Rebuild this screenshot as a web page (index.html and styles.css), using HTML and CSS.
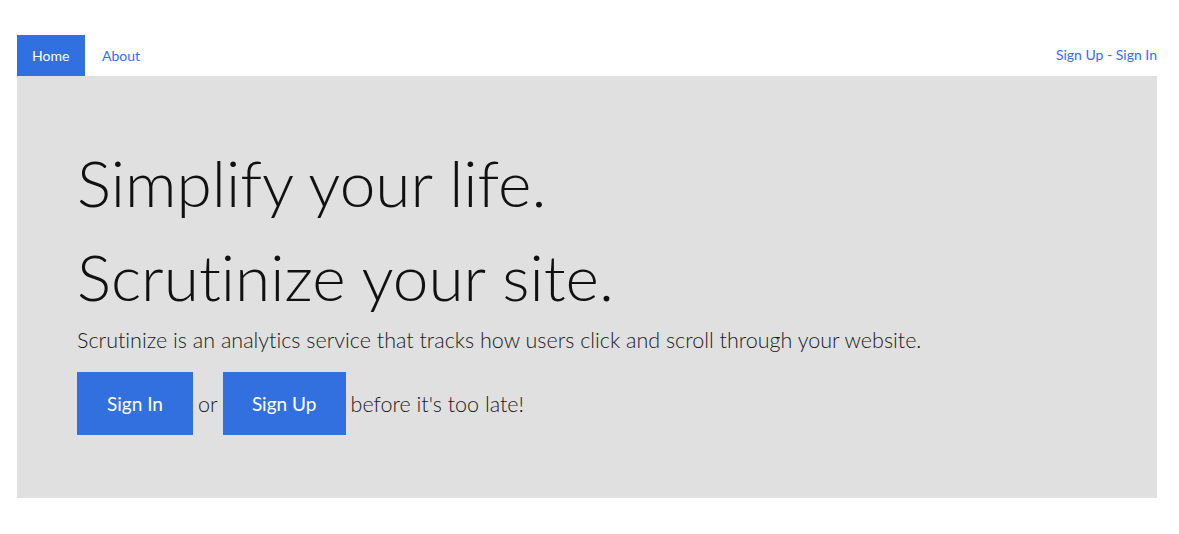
FILE: index.html
```html
<!DOCTYPE html>
<html>
<head>
<meta charset="utf-8">
<link rel="stylesheet" href="styles.css">
</head>
<body>
<div class="page">
  <nav class="nav">
    <div class="tabs">
      <a class="tab active">Home</a>
      <a class="tab">About</a>
    </div>
    <div class="auth"><a>Sign Up</a> - <a>Sign In</a></div>
  </nav>
  <section class="hero">
    <h1 class="title">Simplify your life.</h1>
    <h1 class="title">Scrutinize your site.</h1>
    <p class="lead">Scrutinize is an analytics service that tracks how users click and scroll through your website.</p>
    <div class="cta">
      <a class="btn btn-in">Sign In</a>
      <span class="or">or</span>
      <a class="btn btn-up">Sign Up</a>
      <span class="late">before it's too late!</span>
    </div>
  </section>
</div>
</body>
</html>
```

FILE: styles.css
```css
html, body {
  margin: 0;
  padding: 0;
  background: #fff;
}
body {
  font-family: "Lato", "Open Sans", sans-serif;
  font-variant-ligatures: none;
  color: #111;
}
.page {
  padding: 35px 22px 0 17px;
}
.nav {
  display: flex;
  justify-content: space-between;
  align-items: stretch;
  height: 41px;
}
.tabs {
  display: flex;
}
.tab {
  display: flex;
  align-items: center;
  padding: 0 17px;
  font-size: 14px;
  color: #3370df;
  cursor: pointer;
}
.tab.active {
  background: #3370df;
  color: #fff;
  padding: 0 15px;
  width: 38px;
}
.auth {
  font-size: 14px;
  color: #3370df;
  padding-top: 11px;
}
.auth a {
  color: #3370df;
}
.hero {
  background: #e0e0e0;
  height: 422px;
  padding: 60px 60px 0;
  box-sizing: border-box;
}
.title {
  margin: 0;
  font-weight: 300;
  font-size: 64px;
  line-height: 94px;
}
.lead {
  margin: 0;
  font-weight: 300;
  font-size: 21.5px;
  line-height: 32px;
  color: #1a1a1a;
}
.cta {
  display: flex;
  align-items: center;
  margin-top: 16px;
  font-size: 21.5px;
  font-weight: 300;
  color: #1a1a1a;
}
.btn {
  display: flex;
  align-items: center;
  justify-content: center;
  height: 63px;
  background: #3370df;
  color: #fff;
  font-size: 19px;
  font-weight: 400;
}
.btn-in { width: 116px; }
.btn-up { width: 123px; }
.or { margin: 0 5px; }
.late { margin-left: 5px; }
```
